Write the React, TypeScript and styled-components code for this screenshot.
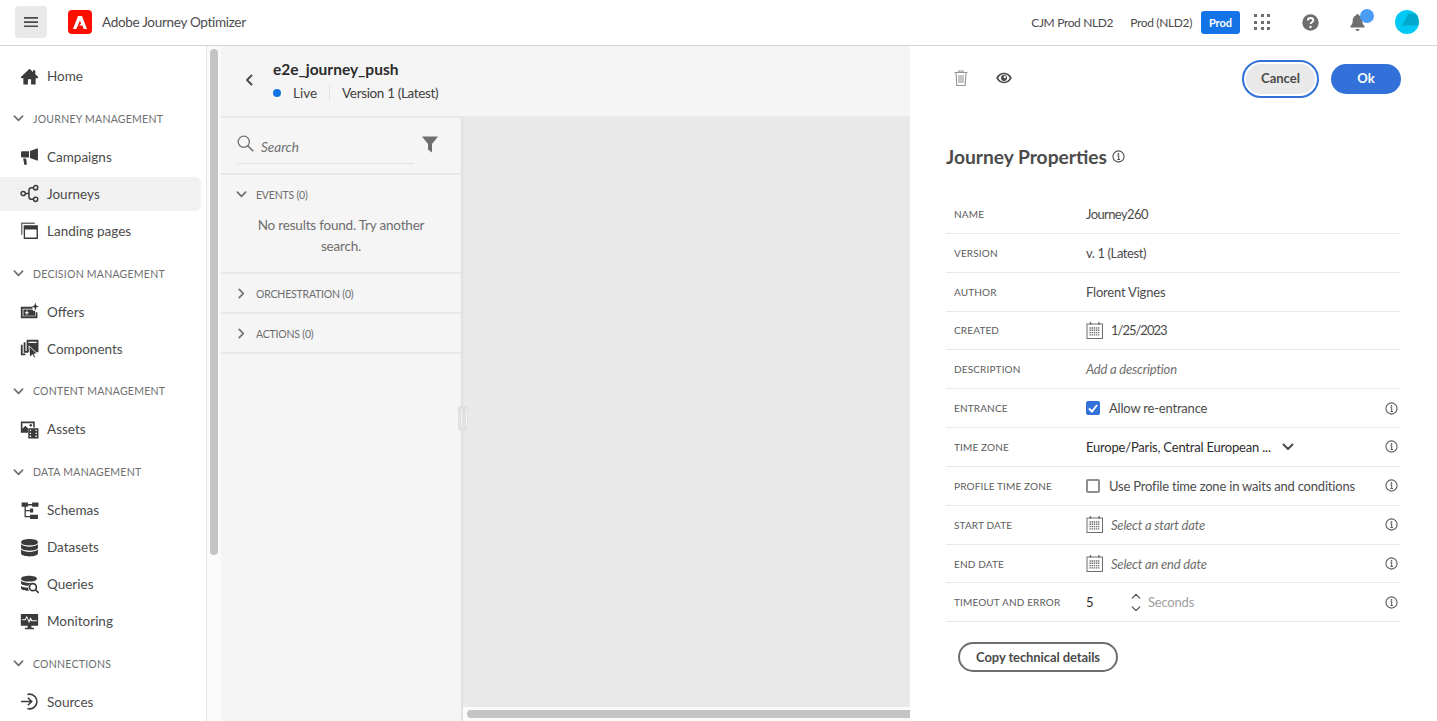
import React from "react";
import styled, { createGlobalStyle } from "styled-components";

const FONT = `Lato, "Noto Sans", "Open Sans", sans-serif`;

const GlobalStyle = createGlobalStyle`
  html, body {
    margin: 0;
    height: 100%;
    overflow: hidden;
    background: #fff;
    font-family: ${FONT};
    color: #4b4b4b;
  }
  * { box-sizing: border-box; }
`;

const Svg: React.FC<{ size?: number; box?: number; children: React.ReactNode }> = ({ size = 19, box = 18, children }) => (
  <svg width={size} height={size} viewBox={`0 0 ${box} ${box}`} fill="currentColor">
    {children}
  </svg>
);

const stroke = { fill: "none", stroke: "currentColor", strokeWidth: 1.4 };

const HomeIcon = () => (
  <Svg>
    <path d="M9 1.600 .6 9.600l.9 1H3.200V16.600h4.300V11.500h3V16.600h4.300V10.600h1.700l.9-1L14.500 6.900V3h-2.200v1.800z" />
  </Svg>
);
const CampaignIcon = () => (
  <Svg>
    <path d="M17 1.400v11.400l-1-.1-6.500-2.300V3.800L16 1.500z" />
    <path d="M1 5.200c0-.7.500-1.200 1.200-1.200H8.500v6H2.200C1.500 10 1 9.500 1 8.800z" />
    <path d="M3 10.800h2.800l.7 5.400c0 .4-.3.6-.6.600H4.600c-.3 0-.6-.2-.6-.5z" />
  </Svg>
);
const JourneyIcon = () => (
  <Svg>
    <g {...stroke}>
      <circle cx="3" cy="9" r="2" />
      <circle cx="14.800" cy="3.500" r="2" />
      <circle cx="14.800" cy="14.500" r="2" />
      <path d="M5 9h3.500M12.800 3.500H11c-1.500 0-2.500 1-2.500 2.500v6c0 1.500 1 2.500 2.500 2.500h1.800" />
    </g>
  </Svg>
);
const LandingIcon = () => (
  <Svg>
    <path d="M1 1.500h13v1.300H2.300V13H1z" opacity=".75" />
    <path d="M3.500 4H17v13H3.500zM4.800 8v7.700h10.900V8z" />
  </Svg>
);
const OffersIcon = () => (
  <Svg>
    <path d="M.8 4.600h11v1.700H2.500v7.300h12.300V9.800h1.700v5.500H.8z" />
    <path d="M3.200 7h8.600l.8 1.500 1.700-.5v5H3.200zM6 8.300v1.400H4.700v1H6v1.400h1v-1.400h1.300v-1H7V8.300z" fillRule="evenodd" />
    <path d="M14.500 .4l.9 2.900 2.500.9-2.500.9-.9 2.900-.9-2.900-2.500-.9 2.500-.9z" />
  </Svg>
);
const ComponentsIcon = () => (
  <Svg>
    <path d="M.8 5.500h1.700v8.300h2.600v1.700H.8z" />
    <path d="M3.500 3h1.700v8.300h2.300V13H3.500z" />
    <path d="M6.300 .8h11.200v11.700H6.300zM8 2.500v1.300h7.800V2.500z" fillRule="evenodd" />
    <path d="M8.500 6.500l8 7.500-3.200.3 1.600 2.900-1.600.8-1.500-3-2.700 2.300z" stroke="#fff" strokeWidth=".8" />
  </Svg>
);
const AssetsIcon = () => (
  <Svg>
    <path d="M.8 1.500H14V7H12.500V3H2.300v5.200L5 5.500l2.500 2.200V12H.8z" />
    <circle cx="10.200" cy="5" r="1.200" />
    <path d="M7.800 7.800H17.500V17.500H7.800zM9.200 9.200v1.300h1.300V9.200zm5.500 0v1.300H16V9.200zM9.200 12v1.300h1.300V12zm5.500 0v1.300H16V12zM9.200 14.800v1.300h1.300v-1.300zm5.500 0v1.300H16v-1.300z" fillRule="evenodd" />
  </Svg>
);
const SchemaIcon = () => (
  <Svg>
    <path d="M1.500 1.500h6v4h-2v3h4V7h3V11h-3V9.800h-4v4.400h4V13h7.500v4H9.500v-1.500h-5.200V5.500H1.500zM11.500 1.500h6v4h-6zM7.500 2.800h4V4.200h-4z" />
  </Svg>
);
const DatasetIcon = () => (
  <Svg>
    <path d="M9 1c4 0 8 1 8 3s-4 3-8 3-8-1-8-3 4-3 8-3z" />
    <path d="M1 6c1.500 1.500 5 2.200 8 2.200s6.500-.7 8-2.200v3c0 2-4 3-8 3s-8-1-8-3z" />
    <path d="M1 11c1.500 1.500 5 2.200 8 2.200s6.500-.7 8-2.200v3.500c0 2-4 3-8 3s-8-1-8-3z" />
  </Svg>
);
const QueryIcon = () => (
  <Svg>
    <path d="M8.500 .8c3.600 0 7.500.9 7.500 2.700S12.100 6.200 8.500 6.200 1 5.300 1 3.500 4.900 .8 8.500 .8z" />
    <path d="M1 5.500c1.400 1.400 4.700 2 7.500 2 1 0 2-.1 3-.2-1.700.4-3 1.500-3.700 3C5.100 10.200 2.200 9.600 1 8.500zM1 10.500c1.300 1 3.900 1.500 6.600 1.600 0 1 .3 2 .9 2.800H8C4.200 14.900 1 14 1 12.500z" />
    <g {...stroke} strokeWidth={1.6}>
      <circle cx="12.200" cy="11.500" r="3.300" />
      <path d="M14.700 14l3 3" />
    </g>
  </Svg>
);
const MonitorIcon = () => (
  <Svg>
    <path d="M.8 2h16.400v11H10.800v2h2.500v1.300H4.700V15h2.500v-2H.8zM2 7.800h3.300l1.200-2.300 2 5 1.500-3 .7 1.300H16V7.800h-4.500L10 5 8.500 8 6.500 3.500 4.700 6.800H2z" fillRule="evenodd" />
  </Svg>
);
const SourceIcon = () => (
  <Svg>
    <g {...stroke} strokeWidth={1.5}>
      <path d="M1 9h10M7.500 5.500 11 9l-3.500 3.500" />
      <path d="M7 2.300c.6-.2 1.300-.3 2-.3a7 7 0 1 1-2 13.700" />
    </g>
  </Svg>
);

const Chevron: React.FC<{ dir?: "down" | "right" | "left" | "up"; size?: number; width?: number }> = ({
  dir = "down",
  size = 11,
  width = 1.8,
}) => {
  const d = { down: "M1.500 3.500 6 8l4.500-4.500", up: "M1.500 8.500 6 4l4.500 4.500", right: "M3.500 1.500 8 6l-4.500 4.500", left: "M8.500 1.500 4 6l4.500 4.500" }[dir];
  return (
    <svg width={size} height={size} viewBox="0 0 12 12" fill="none" stroke="currentColor" strokeWidth={width} strokeLinecap="round" strokeLinejoin="round">
      <path d={d} />
    </svg>
  );
};

const InfoIcon = () => (
  <svg width="13" height="13" viewBox="0 0 14 14" fill="none" stroke="currentColor">
    <circle cx="7" cy="7" r="6" strokeWidth="1.200" />
    <circle cx="7" cy="4.200" r=".9" fill="currentColor" stroke="none" />
    <path d="M5.800 6.300H7.200V10M5.800 10.200h2.800" strokeWidth="1.100" />
  </svg>
);

const CalendarIcon = () => (
  <svg width="18" height="19" viewBox="0 0 18 19" fill="none" stroke="#6e6e6e">
    <rect x="1" y="3" width="15.500" height="14.500" strokeWidth="1" />
    <path d="M4.500 1v3M13 1v3" strokeWidth="1.400" />
    <path d="M3.500 7h10.500M3.500 9.300h10.500M3.500 11.600h10.500M3.500 13.900h10.500" strokeWidth="1.400" strokeDasharray="1.400 .7" />
  </svg>
);

const navGroups: { heading?: string; items: { label: string; icon: React.ReactNode; active?: boolean }[] }[] = [
  { items: [{ label: "Home", icon: <HomeIcon /> }] },
  {
    heading: "Journey Management",
    items: [
      { label: "Campaigns", icon: <CampaignIcon /> },
      { label: "Journeys", icon: <JourneyIcon />, active: true },
      { label: "Landing pages", icon: <LandingIcon /> },
    ],
  },
  {
    heading: "Decision Management",
    items: [
      { label: "Offers", icon: <OffersIcon /> },
      { label: "Components", icon: <ComponentsIcon /> },
    ],
  },
  { heading: "Content Management", items: [{ label: "Assets", icon: <AssetsIcon /> }] },
  {
    heading: "Data Management",
    items: [
      { label: "Schemas", icon: <SchemaIcon /> },
      { label: "Datasets", icon: <DatasetIcon /> },
      { label: "Queries", icon: <QueryIcon /> },
      { label: "Monitoring", icon: <MonitorIcon /> },
    ],
  },
  { heading: "Connections", items: [{ label: "Sources", icon: <SourceIcon /> }] },
];

export default function App() {
  return (
    <Page>
      <GlobalStyle />
      <TopBar>
        <MenuButton>
          <svg width="14" height="12" viewBox="0 0 14 12" fill="#4b4b4b">
            <path d="M0 1h14v1.700H0zM0 5.200h14v1.700H0zM0 9.400h14v1.700H0z" />
          </svg>
        </MenuButton>
        <Logo>
          <svg width="14" height="13" viewBox="0 0 14 13" fill="#fff">
            <path d="M5 0h4l5 13h-3.300L9.500 9.500H5.800L8 7.800 7 4.500 3.300 13H0z" />
          </svg>
        </Logo>
        <AppName>Adobe Journey Optimizer</AppName>
        <TopSpacer />
        <OrgName>CJM Prod NLD2</OrgName>
        <SandboxName>Prod (NLD2)</SandboxName>
        <ProdBadge>Prod</ProdBadge>
        <AppsGrid>
          {Array.from({ length: 9 }).map((_, i) => (
            <AppsDot key={i} />
          ))}
        </AppsGrid>
        <HelpButton>
          <svg width="17" height="17" viewBox="0 0 17 17">
            <circle cx="8.500" cy="8.500" r="8.200" fill="#6e6e6e" />
            <path d="M5.800 6.500c0-1.500 1.200-2.500 2.800-2.500s2.700 1 2.700 2.300c0 2-2.700 2-2.700 3.800" fill="none" stroke="#fff" strokeWidth="1.800" />
            <circle cx="8.500" cy="13" r="1.200" fill="#fff" />
          </svg>
        </HelpButton>
        <BellButton>
          <svg width="15" height="19" viewBox="0 0 15 19" fill="#6e6e6e">
            <path d="M7.500 1c.7 0 1.200.5 1.200 1.200 2.400.6 3.600 2.700 3.600 5.300 0 3 .8 4.300 2.200 5.600v1.400H.5v-1.400C1.900 11.800 2.700 10.500 2.700 7.500c0-2.600 1.200-4.700 3.600-5.300C6.300 1.500 6.800 1 7.500 1z" />
            <path d="M5.500 16h4c0 1.100-.9 2-2 2s-2-.9-2-2z" />
          </svg>
          <BellDot />
        </BellButton>
        <Avatar>
          <svg width="24" height="24" viewBox="0 0 24 24">
            <path d="M13.500 3.500 23.500 3.500V15.500H7z" fill="#00a8cc" />
          </svg>
        </Avatar>
      </TopBar>
      <Body>
        <Sidebar>
          <Nav>
            {navGroups.map((group, i) => (
              <NavGroup key={i}>
                {group.heading && (
                  <NavHeading>
                    <Chevron />
                    <span>{group.heading}</span>
                  </NavHeading>
                )}
                {group.items.map((item) => (
                  <NavItem key={item.label} $active={item.active}>
                    <NavIcon>{item.icon}</NavIcon>
                    {item.label}
                  </NavItem>
                ))}
              </NavGroup>
            ))}
          </Nav>
          <ScrollTrack>
            <ScrollThumb />
          </ScrollTrack>
        </Sidebar>
        <Main>
          <JourneyHeader>
            <BackButton>
              <Chevron dir="left" size={12} width={2} />
            </BackButton>
            <div>
              <JourneyName>e2e_journey_push</JourneyName>
              <StatusLine>
                <StatusDot />
                <StatusText>Live</StatusText>
                <VersionText>Version 1 (Latest)</VersionText>
              </StatusLine>
            </div>
          </JourneyHeader>
          <Workspace>
            <Palette>
              <SearchRow>
                <SearchField>
                  <svg width="17" height="17" viewBox="0 0 17 17" fill="none" stroke="#6e6e6e" strokeWidth="1.300">
                    <circle cx="6.800" cy="6.800" r="5.600" />
                    <path d="m10.800 10.800 5.400 5.400" strokeWidth="1.600" />
                  </svg>
                  <SearchText>Search</SearchText>
                </SearchField>
                <FilterIcon>
                  <svg width="16" height="17" viewBox="0 0 16 17" fill="#6e6e6e">
                    <path d="M0 .5h16L10 8v8.500L6 13.500V8z" />
                  </svg>
                </FilterIcon>
              </SearchRow>
              <PaletteSection $height={99}>
                <PaletteHeading>
                  <Chevron />
                  <span>EVENTS (0)</span>
                </PaletteHeading>
                <EmptyText>No results found. Try another search.</EmptyText>
              </PaletteSection>
              <PaletteSection $height={40}>
                <PaletteHeading>
                  <Chevron dir="right" />
                  <span>ORCHESTRATION (0)</span>
                </PaletteHeading>
              </PaletteSection>
              <PaletteSection $height={40}>
                <PaletteHeading>
                  <Chevron dir="right" />
                  <span>ACTIONS (0)</span>
                </PaletteHeading>
              </PaletteSection>
            </Palette>
            <CanvasColumn>
              <Canvas />
              <HScrollTrack>
                <HScrollThumb />
              </HScrollTrack>
              <SplitHandle />
            </CanvasColumn>
          </Workspace>
        </Main>
        <Properties>
          <ActionBar>
            <IconSlot $color="#959595">
              <svg width="14" height="16" viewBox="0 0 14 16" fill="none" stroke="currentColor" strokeWidth="1.100">
                <path d="M.5 2.500h13M4.800 2.500V1h4.400v1.500M2 2.500l.8 13h8.400l.8-13M5 5v8M7 5v8M9 5v8" />
              </svg>
            </IconSlot>
            <IconSlot $color="#4b4b4b">
              <svg width="16" height="12" viewBox="0 0 16 12">
                <path d="M8 .8C4.500.8 1.500 3 .2 6c1.300 3 4.300 5.200 7.800 5.200S14.500 9 15.800 6C14.500 3 11.500.8 8 .8zm0 8.900c-2.500 0-4.700-1.500-5.800-3.700C3.300 3.800 5.500 2.300 8 2.300s4.700 1.500 5.800 3.700C12.700 8.200 10.500 9.700 8 9.700z" fill="#4b4b4b" />
                <circle cx="8" cy="6" r="3" fill="#4b4b4b" />
                <circle cx="8.800" cy="5.200" r="1.100" fill="#fff" />
              </svg>
            </IconSlot>
            <ActionSpacer />
            <CancelButton>Cancel</CancelButton>
            <OkButton>Ok</OkButton>
          </ActionBar>
          <TitleRow>
            <Title>Journey Properties</Title>
            <InfoIcon />
          </TitleRow>
          <PropertyRow label="Name">
            <Value $spacing={-0.6}>Journey260</Value>
          </PropertyRow>
          <PropertyRow label="Version">
            <Value $spacing={-0.4}>v. 1 (Latest)</Value>
          </PropertyRow>
          <PropertyRow label="Author">
            <Value>Florent Vignes</Value>
          </PropertyRow>
          <PropertyRow label="Created">
            <CalendarIcon />
            <Value $spacing={-1}>1/25/2023</Value>
          </PropertyRow>
          <PropertyRow label="Description">
            <Placeholder>Add a description</Placeholder>
          </PropertyRow>
          <PropertyRow label="Entrance" info>
            <CheckBox $checked>
              <svg width="10" height="9" viewBox="0 0 10 9" fill="none" stroke="#fff" strokeWidth="2">
                <path d="m1 4.500 3 3 5-6.500" />
              </svg>
            </CheckBox>
            <CheckLabel>Allow re-entrance</CheckLabel>
          </PropertyRow>
          <PropertyRow label="Time zone" info>
            <ZoneValue>Europe/Paris, Central European ...</ZoneValue>
            <Chevron size={12} width={2} />
          </PropertyRow>
          <PropertyRow label="Profile time zone" info>
            <CheckBox />
            <CheckLabel>Use Profile time zone in waits and conditions</CheckLabel>
          </PropertyRow>
          <PropertyRow label="Start date" info>
            <CalendarIcon />
            <Placeholder>Select a start date</Placeholder>
          </PropertyRow>
          <PropertyRow label="End date" info>
            <CalendarIcon />
            <Placeholder>Select an end date</Placeholder>
          </PropertyRow>
          <PropertyRow label="Timeout and error" info>
            <TimeoutValue>5</TimeoutValue>
            <Stepper>
              <Chevron dir="up" size={10} width={1.400} />
              <Chevron size={10} width={1.400} />
            </Stepper>
            <Unit>Seconds</Unit>
          </PropertyRow>
          <CopyButton>Copy technical details</CopyButton>
        </Properties>
      </Body>
    </Page>
  );
}

const PropertyRow: React.FC<{ label: string; info?: boolean; children: React.ReactNode }> = ({ label, info, children }) => (
  <Row>
    <RowLabel>{label}</RowLabel>
    <RowValue>{children}</RowValue>
    <RowInfo>{info && <InfoIcon />}</RowInfo>
  </Row>
);

const Page = styled.div`
  width: 1437px;
  height: 721px;
  display: flex;
  flex-direction: column;
  overflow: hidden;
`;

const TopBar = styled.header`
  height: 46px;
  flex: none;
  display: flex;
  align-items: center;
  padding: 0 18px 1px 15px;
  border-bottom: 1px solid #d5d5d5;
  background: #fff;
`;

const MenuButton = styled.div`
  width: 32px;
  height: 32px;
  border-radius: 4px;
  background: #e9e9e9;
  display: flex;
  align-items: center;
  justify-content: center;
`;

const Logo = styled.div`
  width: 24px;
  height: 24px;
  margin-left: 21px;
  border-radius: 4px;
  background: #fa0f00;
  display: flex;
  align-items: center;
  justify-content: center;
`;

const AppName = styled.div`
  margin-left: 10px;
  font-size: 13.500px;
  letter-spacing: -0.300px;
  color: #4b4b4b;
`;

const TopSpacer = styled.div`
  flex: 1;
`;

const OrgName = styled.div`
  font-size: 12px;
  letter-spacing: -0.350px;
  color: #4b4b4b;
`;

const SandboxName = styled(OrgName)`
  margin-left: 17px;
`;

const ProdBadge = styled.div`
  width: 39px;
  height: 23px;
  margin-left: 9px;
  border-radius: 3px;
  background: #1473e6;
  color: #fff;
  font-size: 11px;
  font-weight: 700;
  display: flex;
  align-items: center;
  justify-content: center;
`;

const AppsGrid = styled.div`
  width: 16px;
  margin-left: 14px;
  display: grid;
  grid-template-columns: repeat(3, 3px);
  gap: 3.500px;
`;

const AppsDot = styled.span`
  width: 3px;
  height: 3px;
  background: #6e6e6e;
`;

const HelpButton = styled.div`
  margin-left: 32px;
  display: flex;
`;

const BellButton = styled.div`
  position: relative;
  margin-left: 31px;
  display: flex;
`;

const BellDot = styled.span`
  position: absolute;
  top: -4px;
  right: -9px;
  width: 14px;
  height: 14px;
  border-radius: 50%;
  background: #4b9cf5;
`;

const Avatar = styled.div`
  width: 24px;
  height: 24px;
  margin-left: 30px;
  border-radius: 50%;
  overflow: hidden;
  background: #00c8f5;
`;

const Body = styled.div`
  flex: 1;
  min-height: 0;
  display: flex;
`;

const Sidebar = styled.aside`
  width: 221px;
  flex: none;
  display: flex;
`;

const Nav = styled.nav`
  width: 207px;
  padding-top: 13px;
  border-right: 1px solid #e6e6e6;
  overflow: hidden;
`;

const NavGroup = styled.div`
  & + & {
    margin-top: 17.750px;
  }
`;

const NavHeading = styled.div`
  height: 16px;
  margin-bottom: 13px;
  padding-left: 13px;
  display: flex;
  align-items: center;
  gap: 9px;
  font-size: 10.500px;
  letter-spacing: 0.250px;
  text-transform: uppercase;
  color: #6e6e6e;
`;

const NavItem = styled.div<{ $active?: boolean }>`
  width: 201px;
  height: 34px;
  margin-bottom: 3px;
  padding-left: 20px;
  display: flex;
  align-items: center;
  border-radius: 0 6px 6px 0;
  font-size: 13.500px;
  color: #4b4b4b;
  background: ${(p) => (p.$active ? "#f1f1f1" : "transparent")};
`;

const NavIcon = styled.span`
  width: 27px;
  display: flex;
  color: #3a3a3a;
`;

const ScrollTrack = styled.div`
  width: 14px;
  padding: 3px 2px 0 3px;
  background: #fafafa;
`;

const ScrollThumb = styled.div`
  width: 8px;
  height: 506px;
  border-radius: 4px;
  background: #c4c4c4;
`;

const Main = styled.main`
  width: 689px;
  flex: none;
  display: flex;
  flex-direction: column;
  background: #e9e9e9;
`;

const JourneyHeader = styled.div`
  height: 70px;
  flex: none;
  padding-bottom: 3px;
  display: flex;
  align-items: center;
  background: #f5f5f5;
`;

const BackButton = styled.div`
  width: 52px;
  padding-left: 22px;
  display: flex;
  color: #4b4b4b;
`;

const JourneyName = styled.div`
  font-size: 15.500px;
  font-weight: 700;
  line-height: 20px;
  color: #2c2c2c;
`;

const StatusLine = styled.div`
  margin-top: 6px;
  display: flex;
  align-items: center;
  font-size: 13.500px;
  color: #3f3f3f;
`;

const StatusDot = styled.span`
  width: 8px;
  height: 8px;
  border-radius: 50%;
  background: #1473e6;
`;

const StatusText = styled.span`
  margin-left: 12px;
  padding-right: 12px;
  border-right: 1px solid #e1e1e1;
`;

const VersionText = styled.span`
  margin-left: 12px;
  letter-spacing: -0.350px;
`;

const Workspace = styled.div`
  flex: 1;
  min-height: 0;
  margin-top: 2px;
  display: flex;
`;

const Palette = styled.div`
  width: 242px;
  flex: none;
  background: #f5f5f5;
  border-right: 2px solid #e1e1e1;
`;

const SearchRow = styled.div`
  height: 57px;
  padding: 10px 23px 0 16px;
  display: flex;
  align-items: flex-start;
  justify-content: space-between;
  border-bottom: 2px solid #e9e9e9;
`;

const SearchField = styled.div`
  width: 177px;
  height: 36px;
  padding-bottom: 4px;
  display: flex;
  align-items: center;
  border-bottom: 1px solid #e1e1e1;
`;

const SearchText = styled.span`
  margin-left: 7px;
  margin-top: 6px;
  font-size: 13.500px;
  font-style: italic;
  color: #6e6e6e;
`;

const FilterIcon = styled.div`
  margin-top: 8px;
  display: flex;
`;

const PaletteSection = styled.div<{ $height: number }>`
  height: ${(p) => p.$height}px;
  border-bottom: 2px solid #e9e9e9;
`;

const PaletteHeading = styled.div`
  height: 39px;
  padding-left: 15px;
  display: flex;
  align-items: center;
  gap: 9px;
  font-size: 10.500px;
  letter-spacing: -0.200px;
  color: #6e6e6e;
`;

const EmptyText = styled.div`
  width: 200px;
  margin: 1px auto 0;
  font-size: 13.500px;
  letter-spacing: -0.200px;
  line-height: 21px;
  text-align: center;
  color: #6e6e6e;
`;

const CanvasColumn = styled.div`
  position: relative;
  flex: 1;
  display: flex;
  flex-direction: column;
`;

const Canvas = styled.div`
  flex: 1;
  background: #e9e9e9;
`;

const HScrollTrack = styled.div`
  height: 14px;
  padding: 3px 0 3px 4px;
  background: #fafafa;
`;

const HScrollThumb = styled.div`
  height: 8px;
  border-radius: 4px 0 0 4px;
  background: #c4c4c4;
`;

const SplitHandle = styled.div`
  position: absolute;
  left: -5px;
  top: 288px;
  width: 10px;
  height: 25px;
  border-radius: 2px;
  background: #e1e1e1;
  &::after {
    content: "";
    position: absolute;
    left: 3px;
    top: 4px;
    width: 4px;
    height: 17px;
    border-left: 1px solid #f3f3f3;
    border-right: 1px solid #f3f3f3;
  }
`;

const Properties = styled.section`
  width: 527px;
  flex: none;
  padding: 14px 37px 0 36px;
  background: #fff;
`;

const ActionBar = styled.div`
  height: 38px;
  display: flex;
  align-items: center;
`;

const IconSlot = styled.div<{ $color: string }>`
  width: 16px;
  margin: 0 20px 2px 7px;
  display: flex;
  justify-content: center;
  color: ${(p) => p.$color};
`;

const ActionSpacer = styled.div`
  flex: 1;
`;

const CancelButton = styled.div`
  width: 77px;
  height: 38px;
  padding-bottom: 2px;
  border: 2px solid #3271d9;
  border-radius: 19px;
  background: #e9e9e9;
  box-shadow: inset 0 0 0 2px #fff;
  font-size: 13px;
  font-weight: 700;
  color: #4b4b4b;
  display: flex;
  align-items: center;
  justify-content: center;
`;

const OkButton = styled.div`
  width: 70px;
  height: 30px;
  margin-left: 12px;
  margin-right: -1px;
  padding-bottom: 2px;
  border-radius: 15px;
  background: #3271d9;
  font-size: 13px;
  font-weight: 700;
  color: #fff;
  display: flex;
  align-items: center;
  justify-content: center;
`;

const TitleRow = styled.div`
  height: 26px;
  margin-top: 46px;
  margin-bottom: 25px;
  padding-bottom: 2px;
  display: flex;
  align-items: center;
  gap: 5px;
  color: #4b4b4b;
`;

const Title = styled.h2`
  margin: 0;
  font-size: 19.200px;
  font-weight: 700;
  color: #4b4b4b;
`;

const Row = styled.div`
  height: 38.850px;
  padding: 0 1px 0 8px;
  display: grid;
  grid-template-columns: 132px 1fr 14px;
  align-items: center;
  border-bottom: 1px solid #e9e9e9;
`;

const RowLabel = styled.div`
  font-size: 10px;
  letter-spacing: 0.150px;
  text-transform: uppercase;
  color: #5c5c5c;
`;

const RowValue = styled.div`
  display: flex;
  align-items: center;
  min-width: 0;
  gap: 7px;
  font-size: 13px;
  letter-spacing: -0.200px;
`;

const RowInfo = styled.div`
  display: flex;
  color: #5c5c5c;
`;

const Value = styled.span<{ $spacing?: number }>`
  color: #4b4b4b;
  letter-spacing: ${(p) => p.$spacing ?? -0.2}px;
`;

const Placeholder = styled.span`
  font-style: italic;
  color: #6e6e6e;
`;

const CheckBox = styled.span<{ $checked?: boolean }>`
  width: 14px;
  height: 14px;
  flex: none;
  margin-right: 2px;
  border-radius: 2px;
  border: ${(p) => (p.$checked ? "none" : "2px solid #8e8e8e")};
  background: ${(p) => (p.$checked ? "#3271d9" : "#fff")};
  display: flex;
  align-items: center;
  justify-content: center;
`;

const CheckLabel = styled.span`
  color: #4b4b4b;
`;

const ZoneValue = styled.span`
  margin-right: 4px;
  color: #2c2c2c;
`;

const TimeoutValue = styled.span`
  width: 38px;
  color: #2c2c2c;
`;

const Stepper = styled.span`
  display: flex;
  flex-direction: column;
  gap: 3px;
  color: #4b4b4b;
`;

const Unit = styled.span`
  color: #a0a0a0;
`;

const CopyButton = styled.div`
  width: 160px;
  height: 30px;
  margin: 20px 0 0 12px;
  border: 2px solid #6e6e6e;
  border-radius: 15px;
  font-size: 13px;
  font-weight: 700;
  letter-spacing: -0.100px;
  color: #4b4b4b;
  display: flex;
  align-items: center;
  justify-content: center;
`;
